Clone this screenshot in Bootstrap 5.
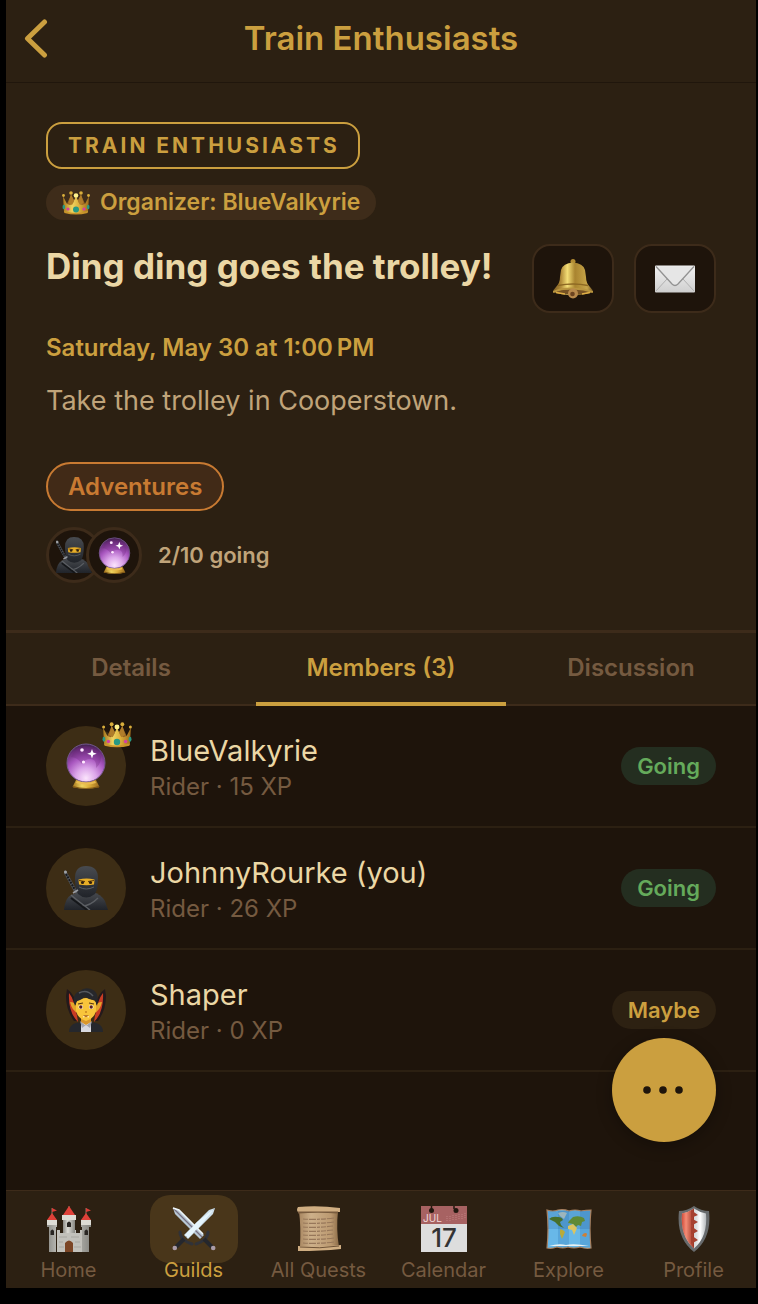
<!DOCTYPE html>
<html lang="en">
<head>
<meta charset="utf-8">
<meta name="viewport" content="width=device-width, initial-scale=1">
<title>Train Enthusiasts</title>
<link rel="stylesheet" href="https://cdn.jsdelivr.net/npm/bootstrap@5.3.0/dist/css/bootstrap.min.css">
<style>
  :root {
    --panel: #2c2012;
    --ink: #1e140b;
    --line: #3d2b1a;
    --gold: #cb9f3f;
    --cream: #ebd7a5;
    --tan: #c0a47a;
    --muted: #755a40;
  }
  body { background: #000; color: var(--cream); font-family: Inter, "Liberation Sans", sans-serif; }
  .shell { margin: 0 2px 16px 6px; min-height: calc(100vh - 16px); background: var(--ink); }
  .topbar { height: 83px; background: var(--panel); border-bottom: 1px solid #20160c; padding: 0 16px; }
  .topbar h1 { font-size: 33px; line-height: 40px; font-weight: 600; color: var(--gold); padding-bottom: 6px; }
  .side { width: 44px; }
  .summary { background: var(--panel); padding: 39px 40px 47px; }
  .guild-tag { border: 2px solid var(--gold); border-radius: 16px; color: var(--gold); font-size: 21px; line-height: 43px; font-weight: 700; letter-spacing: 3px; padding: 0 18px 0 20px; }
  .organizer { background: #3e2c1a; color: var(--gold); font-size: 23px; line-height: 35px; font-weight: 600; padding: 0 16px; gap: 10px; margin-top: 16px; }
  .title-row { margin-top: 24px; gap: 20px; }
  .title-row h2 { font-size: 35px; line-height: 44px; font-weight: 700; }
  .tool { width: 82px; height: 69px; border: 2px solid var(--line); border-radius: 18px; background: var(--ink); padding: 0; }
  .tool:hover { background: var(--line); border-color: var(--line); }
  .when { font-size: 24px; line-height: 30px; font-weight: 600; color: var(--gold); margin-top: 20px; }
  .about { font-size: 27px; line-height: 40px; color: var(--tan); margin-top: 18px; }
  .topic { border: 2px solid #c87a32; background: #412a17; color: #c87a32; font-size: 24px; line-height: 45px; font-weight: 600; padding: 0 20px; margin-top: 41px; }
  .going-row { margin-top: 16px; gap: 16px; }
  .face { width: 56px; height: 56px; border: 3px solid var(--line); background: var(--ink); }
  .face + .face { margin-left: -16px; }
  .count { font-size: 22px; line-height: 30px; font-weight: 600; color: var(--tan); }
  .tabs { height: 76px; background: var(--panel); border-top: 3px solid var(--line); box-shadow: inset 0 -2px var(--line); }
  .tabs .nav-link { height: 73px; color: var(--muted); font-size: 24px; line-height: 30px; font-weight: 600; padding: 20px 0 19px; border-bottom: 4px solid transparent; border-radius: 0; }
  .tabs .nav-link.active { color: var(--gold); border-color: var(--gold); }
  .member { height: 122px; padding: 0 40px; border-bottom: 2px solid var(--panel); gap: 24px; }
  .avatar { width: 80px; height: 80px; background: #3d2d15; }
  .rank { position: absolute; top: -4px; right: -6px; }
  .who { font-size: 29px; line-height: 38px; padding-top: 4px; }
  .stat { font-size: 24px; line-height: 34px; color: var(--muted); }
  .reply { font-size: 22px; line-height: 38px; font-weight: 600; padding: 0 16px; }
  .yes { background: #242e20; color: #65aa5b; }
  .maybe { background: #2d2112; color: var(--gold); }
  .more { position: absolute; right: 40px; bottom: 48px; width: 104px; height: 104px; border: 0; background: var(--gold); box-shadow: 0 4px 16px rgba(0, 0, 0, .3); }
  .dock { height: 98px; background: var(--panel); border-top: 1px solid var(--line); padding-top: 4px; }
  .dock a { color: var(--muted); font-size: 20px; line-height: 24px; text-decoration: none; }
  .dock a.active { color: var(--gold); }
  .dock-icon { width: 88px; height: 68px; border-radius: 20px; margin-bottom: -5px; }
  .dock a.active .dock-icon { background: #49361a; }
  svg { display: block; flex: none; }
</style>
</head>
<body>
<svg width="0" height="0" class="position-absolute" aria-hidden="true">
  <defs>
    <linearGradient id="gold" x2="1"><stop stop-color="#a5751c"/><stop offset=".35" stop-color="#efd460"/><stop offset=".65" stop-color="#d9aa38"/><stop offset="1" stop-color="#9b6a1d"/></linearGradient>
    <linearGradient id="bellg" x2="1"><stop stop-color="#7d5c22"/><stop offset=".2" stop-color="#b08a38"/><stop offset=".36" stop-color="#f3dd75"/><stop offset=".55" stop-color="#a98430"/><stop offset=".85" stop-color="#c7a549"/><stop offset="1" stop-color="#725425"/></linearGradient>
    <radialGradient id="orb" cx=".5" cy=".9" r=".9"><stop stop-color="#fbe4fc"/><stop offset=".3" stop-color="#dca6ea"/><stop offset=".6" stop-color="#a856bf"/><stop offset=".85" stop-color="#6c2f7d"/><stop offset="1" stop-color="#3c2048"/></radialGradient>
    <linearGradient id="cloth" y2="1" x2="0"><stop stop-color="#484b50"/><stop offset="1" stop-color="#202329"/></linearGradient>
    <linearGradient id="stone" x2="1"><stop stop-color="#8b8b86"/><stop offset=".4" stop-color="#dddcd6"/><stop offset="1" stop-color="#858580"/></linearGradient>
    <linearGradient id="paper" x2="0" y2="1"><stop stop-color="#f2f2f2"/><stop offset="1" stop-color="#cfcfcf"/></linearGradient>
    <linearGradient id="scroll" x2="1"><stop stop-color="#a88660"/><stop offset=".3" stop-color="#cdb08a"/><stop offset=".8" stop-color="#bb9970"/><stop offset="1" stop-color="#8b6b47"/></linearGradient>
    <linearGradient id="red" x2="1"><stop stop-color="#d04c3a"/><stop offset=".35" stop-color="#f58b75"/><stop offset="1" stop-color="#9b3424"/></linearGradient>
    <linearGradient id="steel" x2="1"><stop stop-color="#a9adb0"/><stop offset=".6" stop-color="#dfe1e2"/><stop offset=".75" stop-color="#fff"/><stop offset="1" stop-color="#b4b8bb"/></linearGradient>
    <symbol id="crown" viewBox="0 0 28 24">
      <path d="M4 15 9 4l5 8 5-8 5 11-1 5H5z" fill="#986522"/>
      <path d="M1 5l4 8 3 1 3-2 3-7 3 7 3 2 3-1 4-8-1 16q-12 4-24 0z" fill="url(#gold)"/>
      <path d="M9 3l-2.500 9L10 14l2-4zM19 3l2.500 9L18 14l-2-4z" fill="#b07d2a"/>
      <path d="M2 20q12 4 24 0l-.4 2q-11.600 3-23.200 0z" fill="#c9942a"/>
      <g fill="#d9ae3c"><circle cx="1.500" cy="4.500" r="1.400"/><circle cx="9" cy="2" r="1.800"/><circle cx="19" cy="2" r="1.800"/><circle cx="26.500" cy="4.500" r="1.400"/></g><circle cx="14" cy="4.500" r="2.300" fill="#fff28c"/>
      <circle cx="14" cy="18.500" r="3" fill="#279984"/><g fill="#d43fa4"><circle cx="6" cy="18" r="1.600"/><circle cx="22" cy="18" r="1.600"/></g><g fill="#279984"><ellipse cx="1.800" cy="16" rx="1.300" ry="2.300"/><ellipse cx="26.200" cy="16" rx="1.300" ry="2.300"/></g>
    </symbol>
    <symbol id="ball" viewBox="0 0 40 46">
      <path d="M10 37h20l3.500 7q-13.500 3.500-27 0z" fill="url(#gold)"/><path d="M7 43q13 4 26 0v1.500q-13 2.500-26 0z" fill="#815918"/>
      <circle cx="20" cy="20" r="19" fill="url(#orb)" stroke="#74578f"/>
      <path d="M11 38q9 3 18 0l1 2q-10 3-20 0z" fill="#e9bb50"/>
      <path d="M5 14Q10 3 20 3q11 0 15 11 0 7-5 11 1-8-5-9-7 0-9 5-5-7-11-7z" fill="#6a2378" opacity=".3"/>
      <path d="M26 6l1.200 3.500 3.500 1.300-3.500 1.300-1.200 3.500-1.300-3.500-3.500-1.300 3.500-1.300z" fill="#fff"/><g fill="#ffe9ff"><circle cx="16" cy="7" r="1.800"/><circle cx="17.500" cy="19" r="1.600"/></g>
    </symbol>
    <symbol id="ninja" viewBox="0 0 44 44">
      <path d="M1 6 12 26" stroke="#55585e" stroke-width="3" stroke-linecap="round"/><path d="M2 8l9 16" stroke="#17191d" stroke-width="2" stroke-dasharray="2 1"/><circle cx="1.500" cy="6" r="1.500" fill="#9fa2a6"/>
      <path d="M0 44q1-12 7-15l8-3h13q9 2 13 9l3 9z" fill="url(#cloth)"/>
      <path d="M11 12Q11 0 22 0q12 0 12 12 0 11-3 16-9 7-17 0-3-5-3-16z" fill="url(#cloth)"/>
      <path d="M14.500 13.500q8-2 16 0l-.5 5q-7.500 1.500-15 0z" fill="#e8ae27"/><path d="M15 14.500l6 1m3 0 6-1" stroke="#5d3b0d"/><circle cx="18.500" cy="16.500" r="1.600" fill="#30200f"/><circle cx="26.500" cy="16.500" r="1.600" fill="#30200f"/>
      <path d="M15 21q7 4 15 0" stroke="#5a5d62" fill="none"/>
      <path d="M7 29q7 6 19 15M34 32q-8 8-16 8" stroke="#5b5e63" stroke-width="1.500" fill="none"/><path d="M7 32l16 12" stroke="#15171a" stroke-width="2"/><path d="M9 27l5-3" stroke="#96999e" stroke-width="1.800"/>
    </symbol>
    <symbol id="vampire" viewBox="0 0 40 44">
      <path d="M1 1q7 5 9 14l1 18H8Q0 22 0 8zm38 0q-7 5-9 14l-1 18h3q8-11 8-25z" fill="#24191b"/>
      <path d="M3 5q6 7 9 29Q2 24 3 5zm34 0q-6 7-9 29 10-10 9-29z" fill="#c93c24"/>
      <path d="M3 44q0-7 7-9l6-1h8l6 1q7 2 7 9z" fill="#25272c"/><path d="M15 34h10v10H15z" fill="#d9d9df"/><path d="M14 33l6 5 6-5-2 7-4-3-4 3z" fill="#a2a4ad"/>
      <path d="M15 29h10v5l-5 3-5-3z" fill="#d9962a"/>
      <path d="M4 14q5 0 7 5l1 6q-6-2-8-11zm32 0q-5 0-7 5l-1 6q6-2 8-11z" fill="#e5a52b"/>
      <path d="M10 14q10-8 20 0v9q-2 8-10 10-8-2-10-10z" fill="#f9c53b"/>
      <path d="M9 18Q5 6 14 3q4-4 11-2 9 3 6 17l-2-6q-7 0-10-4-3 4-8 5z" fill="#26272b"/><path d="M13 5q8-4 14 3" stroke="#55585e" stroke-width="1.500" fill="none"/>
      <path d="M12 16l5-1m6 0 5 1" stroke="#5a3815" stroke-width="1.200"/>
      <g fill="#fff"><ellipse cx="14.800" cy="19" rx="2.300" ry="2"/><ellipse cx="25.200" cy="19" rx="2.300" ry="2"/></g><g fill="#5d211a"><circle cx="14.800" cy="19" r="1.700"/><circle cx="25.200" cy="19" r="1.700"/></g>
      <path d="M19 24h2" stroke="#c98520" stroke-width="1.300"/><path d="M17 27.500h6l-3 1.300z" fill="#803125"/><path d="M17.800 28v1.500m4.400-1.500v1.500" stroke="#fff" stroke-width=".8"/>
    </symbol>
  </defs>
</svg>

<div class="shell d-flex flex-column">
  <header class="topbar d-flex align-items-center justify-content-between">
    <button class="btn border-0 p-0 side" type="button" aria-label="Back">
      <svg width="30" height="44" viewBox="0 0 30 44" fill="none" stroke="#cb9f3f" stroke-width="5" stroke-linecap="round" stroke-linejoin="round"><path d="M22.500 3 5.500 19.500 22.500 36"/></svg>
    </button>
    <h1 class="m-0">Train Enthusiasts</h1>
    <span class="side"></span>
  </header>

  <section class="summary d-flex flex-column align-items-start">
    <span class="guild-tag text-uppercase">Train Enthusiasts</span>
    <span class="organizer rounded-pill d-flex align-items-center"><svg width="28" height="24" aria-hidden="true"><use href="#crown"/></svg>Organizer: BlueValkyrie</span>
    <div class="title-row d-flex align-items-start w-100">
      <h2 class="m-0 flex-grow-1">Ding ding goes the trolley!</h2>
      <button class="btn tool d-flex align-items-center justify-content-center flex-shrink-0" type="button" aria-label="Notifications">
        <svg width="40" height="40" viewBox="0 0 40 40"><circle cx="20" cy="2.500" r="2.500" fill="#b28b32"/><path d="M0 33q0-2 3-5 4-4 4-10l1-7Q10 4 20 3.500 30 4 32 11l1 7q0 6 4 10 3 3 3 5-8 3-20 3T0 33z" fill="url(#bellg)"/><path d="M2 32q18-4 36 0-6 3.500-18 3.500T2 32z" fill="#765224"/><path d="M5 26.500q15-3 30 0" stroke="#8d6923" stroke-width="1.500" fill="none"/><path d="M0 33q9-4 20-3.500T40 33" stroke="#b9953f" stroke-width="2" fill="none"/><circle cx="20" cy="34.500" r="5" fill="#b98a4c"/><circle cx="19.500" cy="35" r="2.300" fill="#6d4420"/><path d="M3 33.500l9 1.500m17 0 8-1.500" stroke="#dfae45" stroke-width="1.500"/></svg>
      </button>
      <button class="btn tool d-flex align-items-center justify-content-center flex-shrink-0" type="button" aria-label="Send a message">
        <svg width="40" height="28" viewBox="0 0 40 28"><rect width="40" height="27" y=".5" rx="1" fill="url(#paper)"/><path d="M1 26 12 14m27 12L28 14" stroke="#b1b1b1"/><path d="M1 1.500 17 19q3 3 6 0L39 1.500" fill="#e6e6e6" stroke="#929292" stroke-width="1.300"/></svg>
      </button>
    </div>
    <p class="when mb-0">Saturday, May 30 at 1:00&#8239;PM</p>
    <p class="about mb-0">Take the trolley in Cooperstown.</p>
    <span class="topic rounded-pill">Adventures</span>
    <div class="going-row d-flex align-items-center">
      <div class="d-flex">
        <span class="face rounded-circle d-flex align-items-center justify-content-center"><svg width="36" height="36"><use href="#ninja"/></svg></span>
        <span class="face rounded-circle d-flex align-items-center justify-content-center"><svg width="33" height="37"><use href="#ball"/></svg></span>
      </div>
      <span class="count">2/10 going</span>
    </div>
  </section>

  <nav class="tabs nav nav-fill flex-nowrap" aria-label="Quest sections">
    <a class="nav-link w-100" href="#details">Details</a>
    <a class="nav-link w-100 active" href="#members" aria-current="page">Members (3)</a>
    <a class="nav-link w-100" href="#discussion">Discussion</a>
  </nav>

  <main id="members" class="flex-grow-1 position-relative">
    <ul class="list-unstyled m-0">
      <li class="member d-flex align-items-center">
        <span class="avatar rounded-circle position-relative d-flex align-items-center justify-content-center flex-shrink-0"><svg width="40" height="46"><use href="#ball"/></svg><svg class="rank" width="30" height="26"><use href="#crown"/></svg></span>
        <div class="flex-grow-1"><div class="who">BlueValkyrie</div><div class="stat">Rider · 15 XP</div></div>
        <span class="reply yes rounded-pill">Going</span>
      </li>
      <li class="member d-flex align-items-center">
        <span class="avatar rounded-circle d-flex align-items-center justify-content-center flex-shrink-0"><svg width="44" height="44"><use href="#ninja"/></svg></span>
        <div class="flex-grow-1"><div class="who">JohnnyRourke (you)</div><div class="stat">Rider · 26 XP</div></div>
        <span class="reply yes rounded-pill">Going</span>
      </li>
      <li class="member d-flex align-items-center">
        <span class="avatar rounded-circle d-flex align-items-center justify-content-center flex-shrink-0"><svg width="40" height="44"><use href="#vampire"/></svg></span>
        <div class="flex-grow-1"><div class="who">Shaper</div><div class="stat">Rider · 0 XP</div></div>
        <span class="reply maybe rounded-pill">Maybe</span>
      </li>
    </ul>
    <button class="more rounded-circle p-0 d-flex align-items-center justify-content-center" type="button" aria-label="More actions"><svg width="42" height="10" viewBox="0 0 42 10" fill="#1e140b"><circle cx="4" cy="5" r="3.800"/><circle cx="20" cy="5" r="3.800"/><circle cx="36" cy="5" r="3.800"/></svg></button>
  </main>

  <nav class="dock row row-cols-6 g-0 text-center" aria-label="Main">
    <a class="col d-flex flex-column align-items-center" href="#home"><span class="dock-icon d-flex align-items-center justify-content-center">
      <svg width="46" height="46" viewBox="0 0 46 46"><path d="M6 9V2m17 4V0m17 9V2" stroke="#8f7665"/><path d="M6 2l5 2.500-5 1.500zM40 2l5 2.500-5 1.500z" fill="#dc3d38"/><path d="M11 24h3v3h4v-3h4v3h4v-3h4v3h4v-3h3v22H11z" fill="#c2c1bb"/><path d="M17 12h12v15H17z" fill="url(#stone)"/><path d="M1 14h10v7h-1v25H3V21H1zM35 14h10v7h-2v25h-7V21h-1z" fill="url(#stone)"/><path d="M23 0l6 9H17zM6 7l5 7H1zm34 0 5 7H35z" fill="#df4038"/><path d="M16 9h14v5H16z" fill="#dddbd4"/><path d="M1 14h10v5H1zm34 0h10v5H35z" fill="#dddcd5"/><path d="M19 46V37q4-5 8 0v9z" fill="#7b4525"/><path d="M21 17q2-3 4 0v4h-4zM4.500 25q2-3 3.500 0v4H4.500zm34 0q2-3 3.500 0v4h-3.500z" fill="#292623"/><path d="M13 31h8m4 0h8M13 36h4m12 0h5M13 41h5m10 0h7" stroke="#a8a7a1"/></svg>
    </span>Home</a>
    <a class="col d-flex flex-column align-items-center active" href="#guilds" aria-current="page"><span class="dock-icon d-flex align-items-center justify-content-center">
      <svg width="44" height="44" viewBox="0 0 44 44"><path d="M43 1l-6 2L12 28l4 4L41 7z" fill="#cfe0ea"/><path d="M43 1 14 30" stroke="#8794a0"/><path d="M1 1l6 2 25 25-4 4L3 7z" fill="#b8c8d4"/><path d="M1 1l29 29" stroke="#776f80" stroke-width="1.300"/><path d="M1 1l6 2 24 24" fill="none" stroke="#eef6fa" stroke-width="1.500"/><path d="M43 1 25 15 13 28l3 3L28 19z" fill="#e6f5fc"/><path d="M8 25q0 4 3 7t9 5M36 25q0 4-3 7t-9 5" fill="none" stroke="#303238" stroke-width="3" stroke-linecap="round"/><path d="M12 32l-8 8m28-8 8 8" stroke="#25272c" stroke-width="4"/><circle cx="2.800" cy="41" r="2.300" fill="#aa9ca8"/><circle cx="41.200" cy="41" r="2.300" fill="#aa9ca8"/></svg>
    </span>Guilds</a>
    <a class="col d-flex flex-column align-items-center" href="#quests"><span class="dock-icon d-flex align-items-center justify-content-center">
      <svg width="44" height="46" viewBox="0 0 44 46"><path d="M2 5h39q-2 18 1 36H3Q4 20 2 5z" fill="url(#scroll)"/><path d="M1 1q20-2 42 1v4H1q-2-2 0-5z" fill="#d0ae82"/><path d="M1 5.500h40v2q-20-1.500-40 0z" fill="#785b3e"/><path d="M1 40q20 2 43-1v4q-20 2-43 2z" fill="#d0ae82"/><path d="M3 41q20 2 39-1" stroke="#6e5237" fill="none"/><path d="M6 13q15 1 31-1M6 17q15 1 31-1M6 21q15 1 30-1M6 25q15 1 30-1M6 29q15 1 30-1M6 33q15 1 31-1M6 37q15 1 31-1" stroke="#97775a" stroke-width="1.200" fill="none" stroke-dasharray="5 1 7 1 3 1"/></svg>
    </span>All Quests</a>
    <a class="col d-flex flex-column align-items-center" href="#calendar"><span class="dock-icon d-flex align-items-center justify-content-center">
      <svg width="46" height="46" viewBox="0 0 46 46"><path fill="#ddd" d="M0 17h46v29H0z"/><path fill="#a76262" d="M0 0h46v18H0z"/><circle cx="10.500" cy="4.500" r="2.500" fill="#21180f"/><circle cx="35" cy="4.500" r="2.500" fill="#21180f"/><path d="M10.500 0v3M33 0v3" stroke="#21180f" stroke-width="1.500"/><path d="M26 10v6m3-6v6m3-7v6m3-6v6m3-7v6m3-6v6m3-7v6" stroke="#c08080" stroke-dasharray="1 1"/><text x="2" y="16" font-size="10" fill="#f2d9d9" font-family="Inter">JUL</text><text x="23" y="41" font-size="26" font-weight="500" fill="#333" text-anchor="middle" font-family="Inter">17</text></svg>
    </span>Calendar</a>
    <a class="col d-flex flex-column align-items-center" href="#explore"><span class="dock-icon d-flex align-items-center justify-content-center">
      <svg width="46" height="40" viewBox="0 0 46 40"><path d="M1 1q6 2 11 0 6-1 11 1 6-2 12 0 5-1 10-1-2 18 0 38-5 1-11-1-6 2-12 0-5 2-11 0-5 2-10 1 2-20 0-38z" fill="#68b8e8" stroke="#a9805f" stroke-width="1.200"/><path d="M12 2h11v36H12zM34 2h10v36H34z" fill="#347fb8" opacity=".3"/><path d="M2 2h42v18H2z" fill="#27619b" opacity=".22"/><path d="M3 10q3-3 9-2 4 0 5 3l-3 2 1 3 3 3-5-2-4-4z" fill="#486f2b"/><path d="M12 4q5-2 9 0l-3 6-4-3z" fill="#9cb5bc"/><path d="M14 20q4 1 5 3l-3 7-2-5z" fill="#b9ab39"/><path d="M23 12l4-4q6-2 11 1l1 3-3 1-1 4-3-1-2 2-3-3-5-1z" fill="#5f8a35"/><path d="M22 17l5-2 4 4-3 7-2-5-4-1z" fill="#dcc560"/><path d="M37 25q3-2 4 0l-1 3-4-1z" fill="#cd7f36"/><path d="M3 37q10-3 17-1 8-2 23 1z" fill="#e9f3f4"/></svg>
    </span>Explore</a>
    <a class="col d-flex flex-column align-items-center" href="#profile"><span class="dock-icon d-flex align-items-center justify-content-center">
      <svg width="34" height="46" viewBox="0 0 34 46"><path d="M17 0q7 5 15 5 3 27-15 41Q-1 32 2 5q8 0 15-5z" fill="#686b6d"/><path d="M17 2.500q6 4 12 5 2 23-12 35Q3 30 5 7.500q6-1 12-5z" fill="url(#steel)"/><path d="M17 2.500v40Q3 30 5 7.500q6-1 12-5z" fill="url(#red)"/><path d="M14 4l7 5-7 3 7 4-7 4 7 5-7 4 7 5-7 4z" fill="#a64130"/></svg>
    </span>Profile</a>
  </nav>
</div>
<script src="https://cdn.jsdelivr.net/npm/bootstrap@5.3.0/dist/js/bootstrap.bundle.min.js"></script>
</body>
</html>
